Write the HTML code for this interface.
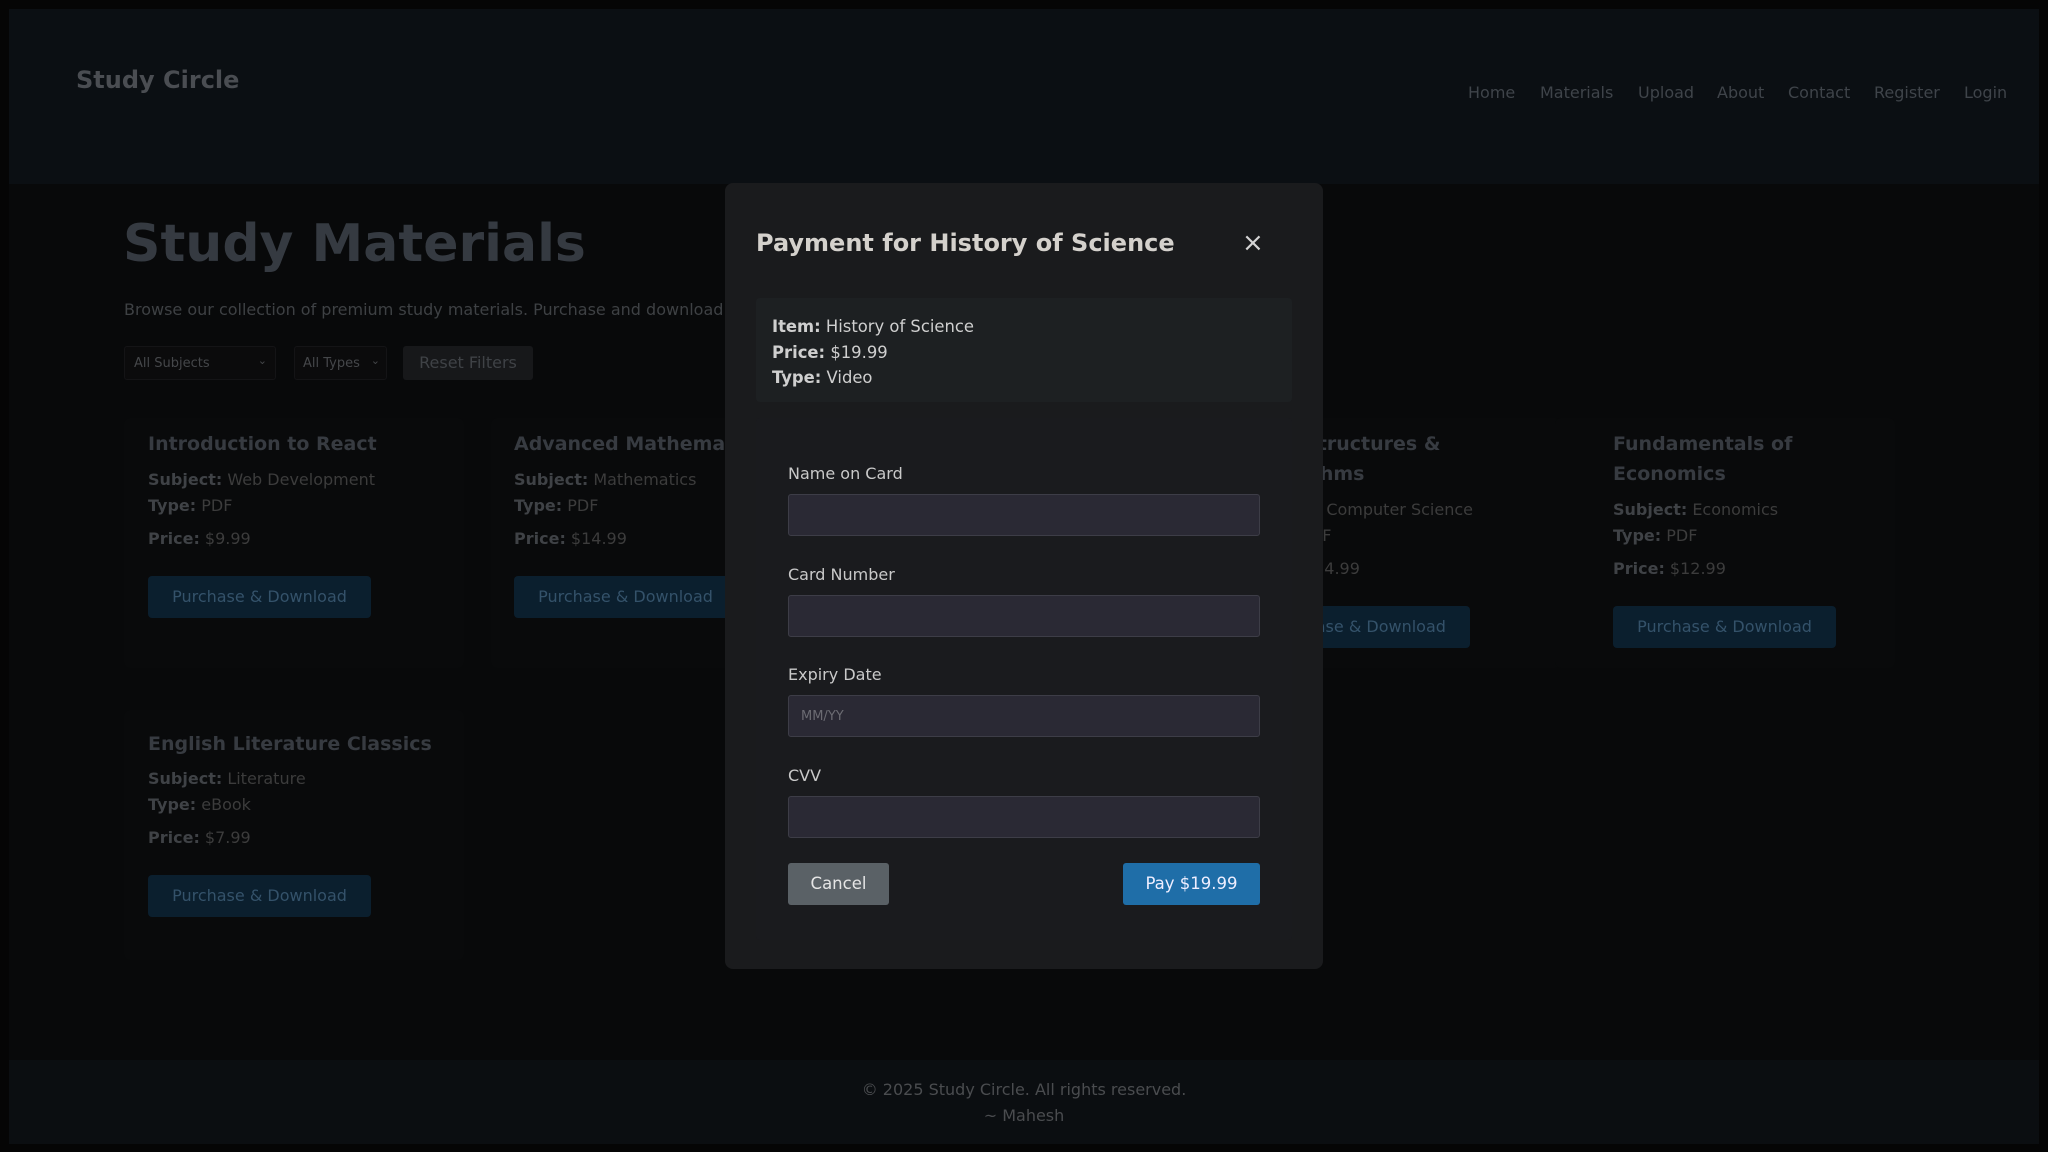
<!DOCTYPE html>
<html><head><meta charset="utf-8"><style>
*{margin:0;padding:0;box-sizing:border-box}
body{width:2048px;height:1152px;background:#050505;font-family:"DejaVu Sans","Liberation Sans",sans-serif;position:relative;overflow:hidden}
.a{position:absolute;white-space:nowrap}
.frame{position:absolute;left:9px;top:9px;width:2030px;height:1135px;background:#08090a}
.hdr{position:absolute;left:9px;top:9px;width:2030px;height:175px;background:#0b0f13}
.ftr{position:absolute;left:9px;top:1060px;width:2030px;height:84px;background:#0b0e11}
.nav{font-size:16px;color:#3f444a;top:83px}
.card{position:absolute;background:#090a0b;border-radius:6px;width:340px}
.ct{font-size:19px;font-weight:bold;color:#373b41;line-height:30px}
.cl{font-size:16px;color:#3c3c3c}
.cl b{color:#3f4246}
.btn{position:absolute;background:#0b1f2e;color:#34526a;font-size:16px;border-radius:4px;width:223px;height:42px;line-height:42px;text-align:center}
.modal{position:absolute;left:725px;top:183px;width:598px;height:786px;background:#1a1b1d;border-radius:8px}
.lbl{font-size:16px;color:#c9c9c9}
.inp{position:absolute;left:63px;width:472px;height:42px;background:#2a2934;border:1px solid #3d3d47;border-radius:3px}
</style></head><body>
<div class="frame"></div>
<div class="hdr"></div>
<div class="a" style="left:76px;top:66px;font-size:24px;font-weight:bold;color:#4a4d52">Study Circle</div>
<div class="a nav" style="left:1468px">Home</div>
<div class="a nav" style="left:1540px">Materials</div>
<div class="a nav" style="left:1638px">Upload</div>
<div class="a nav" style="left:1717px">About</div>
<div class="a nav" style="left:1788px">Contact</div>
<div class="a nav" style="left:1874px">Register</div>
<div class="a nav" style="left:1964px">Login</div>

<div class="a" style="left:123px;top:214px;font-size:52px;font-weight:bold;color:#353a41">Study Materials</div>
<div class="a" style="left:124px;top:300px;font-size:16px;color:#3e4144">Browse our collection of premium study materials. Purchase and download</div>
<div class="a" style="left:124px;top:346px;width:152px;height:34px;background:#0b0b0c;border:1px solid #141416;border-radius:3px;font-size:13px;color:#45474a;padding:9px 9px">All Subjects<span style="position:absolute;right:8px;top:7px;font-size:11px">⌄</span></div>
<div class="a" style="left:294px;top:346px;width:93px;height:34px;background:#0b0b0c;border:1px solid #141416;border-radius:3px;font-size:13px;color:#45474a;padding:9px 8px">All Types<span style="position:absolute;right:6px;top:7px;font-size:11px">⌄</span></div>
<div class="a" style="left:403px;top:346px;width:130px;height:34px;background:#17181a;border-radius:3px;font-size:16px;color:#3f4246;text-align:center;line-height:34px">Reset Filters</div>

<div class="card" style="left:124px;top:418px;height:250px"></div>
<div class="card" style="left:491px;top:418px;height:250px"></div>
<div class="card" style="left:1221px;top:418px;height:250px"></div>
<div class="card" style="left:1555px;top:418px;height:250px"></div>
<div class="card" style="left:124px;top:710px;height:250px"></div>

<div class="a ct" style="left:148px;top:429px">Introduction to React</div>
<div class="a cl" style="left:148px;top:470px"><b>Subject:</b> Web Development</div>
<div class="a cl" style="left:148px;top:496px"><b>Type:</b> PDF</div>
<div class="a cl" style="left:148px;top:529px"><b>Price:</b> $9.99</div>
<div class="btn" style="left:148px;top:576px">Purchase &amp; Download</div>

<div class="a ct" style="left:514px;top:429px">Advanced Mathematics</div>
<div class="a cl" style="left:514px;top:470px"><b>Subject:</b> Mathematics</div>
<div class="a cl" style="left:514px;top:496px"><b>Type:</b> PDF</div>
<div class="a cl" style="left:514px;top:529px"><b>Price:</b> $14.99</div>
<div class="btn" style="left:514px;top:576px">Purchase &amp; Download</div>

<div class="a ct" style="left:1247px;top:429px">Data Structures &amp;<br>Algorithms</div>
<div class="a cl" style="left:1247px;top:500px"><b>Subject:</b> Computer Science</div>
<div class="a cl" style="left:1247px;top:526px"><b>Type:</b> PDF</div>
<div class="a cl" style="left:1247px;top:559px"><b>Price:</b> $14.99</div>
<div class="btn" style="left:1247px;top:606px">Purchase &amp; Download</div>

<div class="a ct" style="left:1613px;top:429px">Fundamentals of<br>Economics</div>
<div class="a cl" style="left:1613px;top:500px"><b>Subject:</b> Economics</div>
<div class="a cl" style="left:1613px;top:526px"><b>Type:</b> PDF</div>
<div class="a cl" style="left:1613px;top:559px"><b>Price:</b> $12.99</div>
<div class="btn" style="left:1613px;top:606px">Purchase &amp; Download</div>

<div class="a ct" style="left:148px;top:729px">English Literature Classics</div>
<div class="a cl" style="left:148px;top:769px"><b>Subject:</b> Literature</div>
<div class="a cl" style="left:148px;top:795px"><b>Type:</b> eBook</div>
<div class="a cl" style="left:148px;top:828px"><b>Price:</b> $7.99</div>
<div class="btn" style="left:148px;top:875px">Purchase &amp; Download</div>

<div class="ftr"></div>
<div class="a" style="left:0;width:2048px;text-align:center;top:1080px;font-size:16px;color:#4a4c4f">© 2025 Study Circle. All rights reserved.</div>
<div class="a" style="left:0;width:2048px;text-align:center;top:1106px;font-size:16px;color:#4a4c4f">~ Mahesh</div>

<div class="modal">
 <div class="a" style="left:31px;top:46px;font-size:24px;font-weight:bold;color:#d4d1cc">Payment for History of Science</div>
 <div class="a" style="left:517px;top:45px;font-size:26px;color:#d4d4d4">×</div>
 <div class="a" style="left:31px;top:115px;width:536px;height:104px;background:#1d2022;border-radius:4px"></div>
 <div class="a" style="left:47px;top:131px;font-size:16.4px;color:#cfcfcf;line-height:25.5px"><b>Item:</b> History of Science<br><b>Price:</b> $19.99<br><b>Type:</b> Video</div>
 <div class="a" style="left:31px;top:235px;width:536px;height:522px;background:#1a1b1e;border-radius:4px"></div>
 <div class="a lbl" style="left:63px;top:281px">Name on Card</div>
 <div class="inp" style="top:311px"></div>
 <div class="a lbl" style="left:63px;top:382px">Card Number</div>
 <div class="inp" style="top:412px"></div>
 <div class="a lbl" style="left:63px;top:482px">Expiry Date</div>
 <div class="inp" style="top:512px;font-size:13px;color:#6b6b72;padding:13px 12px">MM/YY</div>
 <div class="a lbl" style="left:63px;top:583px">CVV</div>
 <div class="inp" style="top:613px"></div>
 <div class="a" style="left:63px;top:680px;width:101px;height:42px;background:#5a6166;border-radius:3px;color:#e5e5e5;font-size:16.5px;text-align:center;line-height:42px">Cancel</div>
 <div class="a" style="left:398px;top:680px;width:137px;height:42px;background:#1f6ea8;border-radius:3px;color:#eef;font-size:16.5px;text-align:center;line-height:42px">Pay $19.99</div>
</div>
</body></html>
